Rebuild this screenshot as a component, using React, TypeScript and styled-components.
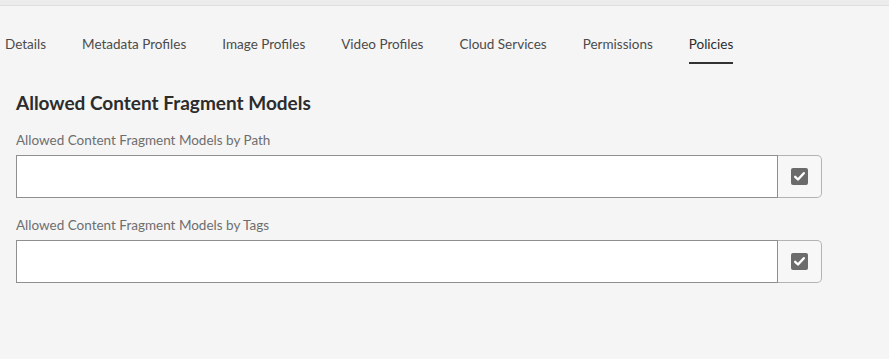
import React from "react";
import styled, { createGlobalStyle } from "styled-components";

const Global = createGlobalStyle`
  html, body { margin: 0; padding: 0; background: #f5f5f5; }
  body { font-family: Lato, "Open Sans", sans-serif; }
`;

const Page = styled.div`
  width: 889px;
  height: 359px;
  background: #f5f5f5;
  overflow: hidden;
`;

const TopStrip = styled.div`
  height: 5px;
  background: #ececec;
  border-bottom: 1px solid #dedede;
`;

const TabBar = styled.nav`
  display: flex;
  gap: 36px;
  padding: 0 0 0 5px;
  height: 58px;
  align-items: flex-start;
`;

const Tab = styled.div<{ $active?: boolean }>`
  display: flex;
  align-items: center;
  padding-top: 20px;
  box-sizing: border-box;
  height: 58px;
  font-size: 13.5px;
  color: ${(p) => (p.$active ? "#2c2c2c" : "#4b4b4b")};
  border-bottom: 2px solid ${(p) => (p.$active ? "#323232" : "transparent")};
`;

const Content = styled.section`
  padding: 27px 0 0 16px;
  display: flex;
  flex-direction: column;
`;

const Heading = styled.h2`
  margin: 0 0 17px 0;
  font-size: 19px;
  font-weight: 700;
  color: #2c2c2c;
  line-height: 24px;
`;

const Field = styled.div`
  display: flex;
  flex-direction: column;
  margin-bottom: 19px;
`;

const Label = styled.label`
  font-size: 13.5px;
  color: #6e6e6e;
  line-height: 16px;
  margin-bottom: 7px;
`;

const Row = styled.div`
  display: flex;
  width: 806px;
  height: 43px;
`;

const Input = styled.input`
  flex: 1;
  box-sizing: border-box;
  height: 43px;
  border: 1px solid #8f8f8f;
  border-radius: 0;
  background: #fff;
  margin: 0;
  outline: none;
`;

const Button = styled.button`
  width: 44px;
  height: 43px;
  box-sizing: border-box;
  border: 1px solid #b3b3b3;
  border-left: none;
  border-radius: 0 5px 5px 0;
  background: #f7f7f7;
  display: flex;
  align-items: center;
  justify-content: center;
  padding: 0;
  margin: 0;
`;

const CheckIcon = () => (
  <svg width="17" height="17" viewBox="0 0 17 17">
    <rect x="0" y="0" width="17" height="17" rx="2" fill="#6b6b6b" />
    <path d="M4.2 8.8 L7 11.5 L12.8 5.2" stroke="#fff" strokeWidth="2.4" fill="none" strokeLinecap="round" strokeLinejoin="round" />
  </svg>
);

const tabs = ["Details", "Metadata Profiles", "Image Profiles", "Video Profiles", "Cloud Services", "Permissions", "Policies"];

export default function App() {
  return (
    <Page>
      <Global />
      <TopStrip />
      <TabBar>
        {tabs.map((t) => (
          <Tab key={t} $active={t === "Policies"}>{t}</Tab>
        ))}
      </TabBar>
      <Content>
        <Heading>Allowed Content Fragment Models</Heading>
        <Field>
          <Label>Allowed Content Fragment Models by Path</Label>
          <Row>
            <Input />
            <Button><CheckIcon /></Button>
          </Row>
        </Field>
        <Field>
          <Label>Allowed Content Fragment Models by Tags</Label>
          <Row>
            <Input />
            <Button><CheckIcon /></Button>
          </Row>
        </Field>
      </Content>
    </Page>
  );
}
